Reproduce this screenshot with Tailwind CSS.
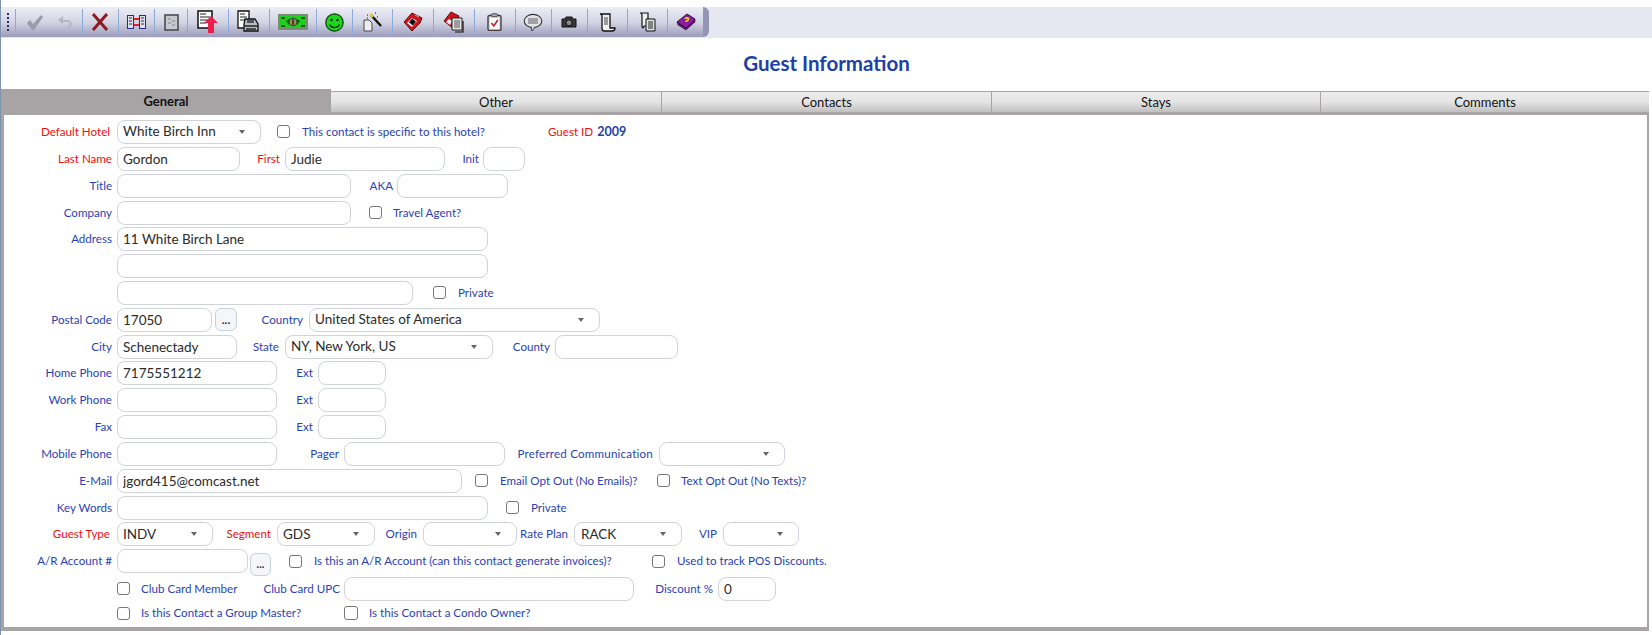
<!DOCTYPE html>
<html lang="en">
<head>
    <meta charset="UTF-8">
    <title>Guest Information</title>
    <script src="https://cdn.jsdelivr.net/npm/@tailwindcss/browser@4"></script>
</head>
<body class="bg-white font-['Lato',sans-serif]">
<div class="h-[635px] w-[1652px] overflow-hidden border-l border-[#7b93ad] pt-[7px]">

    <!-- Toolbar -->
    <div class="h-[31px] bg-[#e6e7f0] flex">
        <div class="w-[708px] h-[30px] flex items-center rounded-r-[6px] bg-gradient-to-b from-[#ecedf5] via-[#d4d5e4] to-[#9c9cbc] border-r-[6px] border-[#9494b4]">
            <!-- grip -->
            <div class="w-[14px] h-full flex flex-col items-center justify-center gap-[2px] pl-[1px]">
                <span class="w-[2px] h-[2px] bg-[#26305e]"></span><span class="w-[2px] h-[2px] bg-[#26305e]"></span><span class="w-[2px] h-[2px] bg-[#26305e]"></span><span class="w-[2px] h-[2px] bg-[#26305e]"></span><span class="w-[2px] h-[2px] bg-[#26305e]"></span>
            </div>
            <div class="w-[41px] h-[26px] pr-[2px] border-l border-[#8aa8d8] flex items-center justify-center">
                <svg width="18" height="18" viewBox="0 0 18 18"><path d="M1 10l3-3 3 4 8-9 2 2-9 13h-2z" fill="#9b9eaa"/></svg>
            </div>
            <div class="w-[26px] h-[26px] pr-[6px] flex items-center justify-center">
                <svg width="15" height="12" viewBox="0 0 15 12"><path d="M3 5h7a3 3 0 0 1 2 5l-2 1" fill="none" stroke="#b4b6c0" stroke-width="2"/><path d="M0 4l5-4v8z" fill="#b4b6c0"/></svg>
            </div>
            <div class="w-[36px] h-[26px] border-l border-[#8aa8d8] flex items-center justify-center">
                <svg width="18" height="18" viewBox="0 0 18 18"><path d="M2 1l14 16M16 1L2 17" fill="none" stroke="#8c1a1e" stroke-width="3"/></svg>
            </div>
            <div class="w-[37px] h-[26px] border-l border-[#8aa8d8] flex items-center justify-center">
                <svg width="19" height="14" viewBox="0 0 19 14"><rect x="0.5" y="0.5" width="6" height="13" fill="#dfe0ee" stroke="#27279a"/><rect x="12.5" y="0.5" width="6" height="13" fill="#dfe0ee" stroke="#27279a"/><path d="M2 3h3M2 6h3M2 9h3M14 3h3M14 6h3M14 9h3" stroke="#333"/><path d="M7 4h5M7 10h5" stroke="#e8202a" stroke-width="2"/></svg>
            </div>
            <div class="w-[33px] h-[26px] border-l border-[#8aa8d8] flex items-center justify-center">
                <svg width="15" height="17" viewBox="0 0 15 17"><rect x="1" y="1" width="13" height="15" fill="#c8c8d0" stroke="#444" stroke-width="1.5"/><path d="M4 5h3M8 7h3M4 9h3M8 11h3" stroke="#888"/></svg>
            </div>
            <div class="w-[41px] h-[26px] border-l border-[#8aa8d8] flex items-center justify-center">
                <svg width="22" height="24" viewBox="0 0 22 24"><path d="M1 1h14v17H1z" fill="#fff" stroke="#111" stroke-width="1.5"/><path d="M3 4h6M3 7h10M3 10h8M3 13h6" stroke="#222" stroke-width="1.2"/><path d="M14 6l7 7h-4v10h-6V13H7z" fill="#e8204a"/></svg>
            </div>
            <div class="w-[41px] h-[26px] border-l border-[#8aa8d8] flex items-center justify-center">
                <svg width="24" height="24" viewBox="0 0 24 24"><path d="M1 1h11v17H1z" fill="#fff" stroke="#111" stroke-width="1.3"/><path d="M3 4h5M3 7h7M3 10h6" stroke="#222"/><path d="M8 9h10l3 5v7H7v-7z" fill="#b8bcc4" stroke="#111" stroke-width="1.3"/><path d="M7 16h14M9 19h10" stroke="#222" stroke-width="1.5"/><rect x="10" y="10" width="7" height="3" fill="#555"/></svg>
            </div>
            <div class="w-[47px] h-[26px] border-l border-[#8aa8d8] flex items-center justify-center">
                <svg width="30" height="16" viewBox="0 0 30 16"><rect width="30" height="16" fill="#7d8a76"/><rect x="2" y="2" width="26" height="12" fill="#1ed01e"/><circle cx="15" cy="8" r="4" fill="#7a9a60" stroke="#374b2b"/><path d="M15 5v6" stroke="#7a2a20" stroke-width="2"/><path d="M3 3h4v2H3zM23 3h4v2h-4zM3 11h4v2H3zM23 11h4v2h-4zM8 7l3-2v6zM22 7l-3-2v6z" fill="#0d5d0d"/></svg>
            </div>
            <div class="w-[36px] h-[26px] border-l border-[#8aa8d8] flex items-center justify-center">
                <svg width="19" height="19" viewBox="0 0 19 19"><circle cx="9.5" cy="9.5" r="8.7" fill="#18d818" stroke="#0b3d0b" stroke-width="1.2"/><circle cx="6.5" cy="7" r="1.3" fill="#062806"/><circle cx="12.5" cy="7" r="1.3" fill="#062806"/><path d="M4.5 11.5a5.5 5.5 0 0 0 10 0" fill="none" stroke="#062806" stroke-width="1.3"/></svg>
            </div>
            <div class="w-[41px] h-[26px] border-l border-[#8aa8d8] flex items-center justify-center">
                <svg width="19" height="20" viewBox="0 0 19 20"><path d="M1 8h5l3 3v8H1z" fill="#eeeeee" stroke="#444"/><path d="M8 3l10 11" stroke="#111" stroke-width="2.4"/><path d="M7 2l3 3" stroke="#e8d020" stroke-width="2.4"/><path d="M4 3h1M12 1h1M14 5h1M4 6h1" stroke="#a03030" stroke-width="1.3"/></svg>
            </div>
            <div class="w-[41px] h-[26px] border-l border-[#8aa8d8] flex items-center justify-center">
                <svg width="20" height="20" viewBox="0 0 20 20"><path d="M1 10L9 1l10 5-2 5-8 8z" fill="#d0141c" stroke="#5a0c0c"/><path d="M4 11l5-5 5 3-5 6z" fill="#ececf2"/><rect x="7" y="7.5" width="5" height="5" fill="#111" transform="rotate(40 9.5 10)"/><path d="M12 3l4 2" stroke="#f0a0a0"/></svg>
            </div>
            <div class="w-[41px] h-[26px] border-l border-[#8aa8d8] flex items-center justify-center">
                <svg width="22" height="22" viewBox="0 0 22 22"><path d="M1 10L8 1l8 4-5 13z" fill="#d0141c" stroke="#5a0c0c"/><path d="M3 11l3-3 3 2-2 4z" fill="#ececf2"/><path d="M20 10v11H12" fill="none" stroke="#111" stroke-width="1.2"/><path d="M9 7h10v12H9z" fill="#e4e4e4" stroke="#222"/><path d="M11 10h6M11 12h6M11 14h6M11 16h6" stroke="#555"/></svg>
            </div>
            <div class="w-[41px] h-[26px] border-l border-[#8aa8d8] flex items-center justify-center">
                <svg width="15" height="18" viewBox="0 0 15 18"><rect x="1" y="2.5" width="13" height="15" rx="1.5" fill="#dcdce4" stroke="#443f3f" stroke-width="1.4"/><rect x="3" y="5" width="9" height="10.5" fill="#fff"/><rect x="4.5" y="0.7" width="6" height="3" rx="1" fill="#aaa" stroke="#333" stroke-width="0.8"/><path d="M4.5 10l2.3 3 4-6" fill="none" stroke="#b81c2c" stroke-width="1.5"/></svg>
            </div>
            <div class="w-[36px] h-[26px] border-l border-[#8aa8d8] flex items-center justify-center">
                <svg width="20" height="19" viewBox="0 0 20 19"><ellipse cx="10" cy="8" rx="8.8" ry="6.6" fill="#e4e4e8" stroke="#333" stroke-width="1.1"/><rect x="5" y="5" width="10" height="6" fill="#a0a0a8"/><path d="M8 14l1 4 3-3.5" fill="#e4e4e8" stroke="#333"/></svg>
            </div>
            <div class="w-[36px] h-[26px] border-l border-[#8aa8d8] flex items-center justify-center">
                <svg width="16" height="12" viewBox="0 0 16 12"><path d="M1 3h3l1-2h6l1 2h3v8H1z" fill="#38383c" stroke="#111"/><circle cx="8" cy="6.8" r="3" fill="#8a8a90" stroke="#111"/></svg>
            </div>
            <div class="w-[41px] h-[26px] border-l border-[#8aa8d8] flex items-center justify-center">
                <svg width="17" height="19" viewBox="0 0 17 19"><path d="M1 1h10v14h5c0 2-1 3-3 3H5c-1 0-2-1-2-3V3C3 2 2 1 1 1z" fill="#f0f0f2" stroke="#111" stroke-width="1.3"/><path d="M5 5h4M5 7h4M5 9h4M5 11h4" stroke="#444"/></svg>
            </div>
            <div class="w-[40px] h-[26px] border-l border-[#8aa8d8] flex items-center justify-center">
                <svg width="17" height="20" viewBox="0 0 17 20"><path d="M1 1h8v13H5l-1 2c-1 0-1-1-1-2V3C3 2 2 1 1 1z" fill="#f0f0f2" stroke="#111" stroke-width="1.2"/><path d="M7 7h9v12H7z" fill="#e0e0e0" stroke="#111"/><path d="M9 10h5M9 12h5M9 14h5M9 16h5" stroke="#222"/></svg>
            </div>
            <div class="w-[36px] h-[26px] border-l border-[#8aa8d8] flex items-center justify-center">
                <svg width="20" height="18" viewBox="0 0 20 18"><path d="M1 9L11 1l8 5-9 9z" fill="#8c1fa0" stroke="#3a0c48"/><path d="M1 9l1 3 8 5 9-8v-3l-9 9z" fill="#5b1268" stroke="#3a0c48" stroke-width="0.6"/><path d="M9 6c1-2 5-1 3 1-1 1-2 1-2 2" fill="none" stroke="#f0d820" stroke-width="1.6"/></svg>
            </div>
        </div>
    </div>

    <!-- Title -->
    <h1 class="h-[51px] flex items-center justify-center text-[20.5px] font-bold text-[#1d3fa8]">Guest Information</h1>

    <!-- Tabs -->
    <div class="flex h-[26px] w-[1648px] text-[13px] text-[#111] text-center">
        <div class="w-[330px] bg-[#a8a4a6] font-bold leading-[25px]">General</div>
        <div class="w-[330px] bg-[#a8a4a6] border-t-[2px] border-white"><div class="h-[21px] leading-[20px] bg-gradient-to-b from-[#ececec] via-[#e4e4e4] to-[#c2bfc0] border-t border-[#a5a5a5]">Other</div></div>
        <div class="w-[330px] bg-[#a8a4a6] pl-[1px] border-t-[2px] border-white"><div class="h-[21px] leading-[20px] bg-gradient-to-b from-[#ececec] via-[#e4e4e4] to-[#c2bfc0] border-t border-[#a5a5a5]">Contacts</div></div>
        <div class="w-[329px] bg-[#a8a4a6] pl-[1px] border-t-[2px] border-white"><div class="h-[21px] leading-[20px] bg-gradient-to-b from-[#ececec] via-[#e4e4e4] to-[#c2bfc0] border-t border-[#a5a5a5]">Stays</div></div>
        <div class="w-[329px] bg-[#a8a4a6] pl-[1px] border-t-[2px] border-white"><div class="h-[21px] leading-[20px] bg-gradient-to-b from-[#ececec] via-[#e4e4e4] to-[#c2bfc0] border-t border-[#a5a5a5]">Comments</div></div>
    </div>

    <!-- General panel -->
    <div class="w-[1648px] h-[516px] border-l-[3px] border-r-[2px] border-b-[4px] border-[#a8a4a6] pt-[3px] text-[11.6px] text-[#2a3fb5]">

        <div class="flex items-center h-[27px]">
            <label class="w-[113px] text-right pr-[7px] text-[#f01010]">Default Hotel</label>
            <div class="w-[144px] h-6 border border-[#d0d3da] rounded-lg pl-[5px] pr-[15px] flex items-center justify-between text-[13.5px] text-[#2b2b2b]">White Birch Inn <span class="w-0 h-0 border-x-[3px] border-x-transparent border-t-[4px] border-t-[#666]"></span></div>
            <input type="checkbox" class="appearance-none w-[13px] h-[13px] ml-[16px] border border-[#777] rounded-[3px]">
            <span class="ml-[12px] w-[246px]">This contact is specific to this hotel?</span>
            <span class="text-[#f01010]">Guest ID</span>
            <span class="ml-[4px] mt-[2px] font-bold text-[12.5px] text-[#1d3fa8]">2009</span>
        </div>

        <div class="flex items-center h-[27px]">
            <label class="w-[113px] text-right pr-[5px] text-[#f01010]">Last Name</label>
            <input value="Gordon" class="w-[123px] h-6 border border-[#d0d3da] rounded-lg px-[5px] text-[13.5px] text-[#2b2b2b]">
            <label class="w-[45px] text-right pr-[5px] text-[#f01010]">First</label>
            <input value="Judie" class="w-[160px] h-6 border border-[#d0d3da] rounded-lg px-[5px] text-[13.5px] text-[#2b2b2b]">
            <label class="w-[38px] text-right pr-[4px]">Init</label>
            <input class="w-[42px] h-6 border border-[#d0d3da] rounded-lg px-[5px] text-[13.5px] text-[#2b2b2b]">
        </div>

        <div class="flex items-center h-[27px]">
            <label class="w-[113px] text-right pr-[5px]">Title</label>
            <input class="w-[234px] h-6 border border-[#d0d3da] rounded-lg px-[5px] text-[13.5px] text-[#2b2b2b]">
            <label class="w-[46px] text-right pr-[4px]">AKA</label>
            <input class="w-[111px] h-6 border border-[#d0d3da] rounded-lg px-[5px] text-[13.5px] text-[#2b2b2b]">
        </div>

        <div class="flex items-center h-[27px]">
            <label class="w-[113px] text-right pr-[5px]">Company</label>
            <input class="w-[234px] h-6 border border-[#d0d3da] rounded-lg px-[5px] text-[13.5px] text-[#2b2b2b]">
            <input type="checkbox" class="appearance-none w-[13px] h-[13px] ml-[18px] border border-[#777] rounded-[3px]">
            <span class="ml-[11px]">Travel Agent?</span>
        </div>

        <div class="flex items-center h-[26px]">
            <label class="w-[113px] text-right pr-[5px]">Address</label>
            <input value="11 White Birch Lane" class="w-[371px] h-6 border border-[#d0d3da] rounded-lg px-[5px] text-[13.5px] text-[#2b2b2b]">
        </div>

        <div class="flex items-center h-[27px] pl-[113px]">
            <input class="w-[371px] h-6 border border-[#d0d3da] rounded-lg px-[5px] text-[13.5px] text-[#2b2b2b]">
        </div>

        <div class="flex items-center h-[27px] pl-[113px]">
            <input class="w-[296px] h-6 border border-[#d0d3da] rounded-lg px-[5px] text-[13.5px] text-[#2b2b2b]">
            <input type="checkbox" class="appearance-none w-[13px] h-[13px] ml-[20px] border border-[#777] rounded-[3px]">
            <span class="ml-[12px]">Private</span>
        </div>

        <div class="flex items-center h-[27px]">
            <label class="w-[113px] text-right pr-[5px]">Postal Code</label>
            <input value="17050" class="w-[95px] h-6 border border-[#d0d3da] rounded-lg px-[5px] text-[13.5px] text-[#2b2b2b]">
            <button class="w-[22px] h-[23px] ml-[3px] border border-[#c8d0dc] rounded-md bg-[#f4f6f9] font-bold text-[#333] text-[12px] leading-[20px]">...</button>
            <label class="w-[72px] text-right pr-[6px]">Country</label>
            <div class="w-[291px] h-6 border border-[#d0d3da] rounded-lg pl-[5px] pr-[15px] flex items-center justify-between text-[13.5px] text-[#2b2b2b]">United States of America <span class="w-0 h-0 border-x-[3px] border-x-transparent border-t-[4px] border-t-[#666]"></span></div>
        </div>

        <div class="flex items-center h-[27px]">
            <label class="w-[113px] text-right pr-[5px]">City</label>
            <input value="Schenectady" class="w-[120px] h-6 border border-[#d0d3da] rounded-lg px-[5px] text-[13.5px] text-[#2b2b2b]">
            <label class="w-[48px] text-right pr-[6px]">State</label>
            <div class="w-[208px] h-6 border border-[#d0d3da] rounded-lg pl-[5px] pr-[15px] flex items-center justify-between text-[13.5px] text-[#2b2b2b]">NY, New York, US <span class="w-0 h-0 border-x-[3px] border-x-transparent border-t-[4px] border-t-[#666]"></span></div>
            <label class="w-[62px] text-right pr-[5px]">County</label>
            <input class="w-[123px] h-6 border border-[#d0d3da] rounded-lg px-[5px] text-[13.5px] text-[#2b2b2b]">
        </div>

        <div class="flex items-center h-[26px]">
            <label class="w-[113px] text-right pr-[5px]">Home Phone</label>
            <input value="7175551212" class="w-[160px] h-6 border border-[#d0d3da] rounded-lg px-[5px] text-[13.5px] text-[#2b2b2b]">
            <label class="w-[41px] text-right pr-[5px]">Ext</label>
            <input class="w-[68px] h-6 border border-[#d0d3da] rounded-lg px-[5px] text-[13.5px] text-[#2b2b2b]">
        </div>

        <div class="flex items-center h-[27px]">
            <label class="w-[113px] text-right pr-[5px]">Work Phone</label>
            <input class="w-[160px] h-6 border border-[#d0d3da] rounded-lg px-[5px] text-[13.5px] text-[#2b2b2b]">
            <label class="w-[41px] text-right pr-[5px]">Ext</label>
            <input class="w-[68px] h-6 border border-[#d0d3da] rounded-lg px-[5px] text-[13.5px] text-[#2b2b2b]">
        </div>

        <div class="flex items-center h-[27px]">
            <label class="w-[113px] text-right pr-[5px]">Fax</label>
            <input class="w-[160px] h-6 border border-[#d0d3da] rounded-lg px-[5px] text-[13.5px] text-[#2b2b2b]">
            <label class="w-[41px] text-right pr-[5px]">Ext</label>
            <input class="w-[68px] h-6 border border-[#d0d3da] rounded-lg px-[5px] text-[13.5px] text-[#2b2b2b]">
        </div>

        <div class="flex items-center h-[27px]">
            <label class="w-[113px] text-right pr-[5px]">Mobile Phone</label>
            <input class="w-[160px] h-6 border border-[#d0d3da] rounded-lg px-[5px] text-[13.5px] text-[#2b2b2b]">
            <label class="w-[67px] text-right pr-[5px]">Pager</label>
            <input class="w-[161px] h-6 border border-[#d0d3da] rounded-lg px-[5px] text-[13.5px] text-[#2b2b2b]">
            <label class="w-[154px] text-right pr-[6px] tracking-[0.2px]">Preferred Communication</label>
            <div class="w-[126px] h-6 border border-[#d0d3da] rounded-lg pr-[15px] flex items-center justify-end"><span class="w-0 h-0 border-x-[3px] border-x-transparent border-t-[4px] border-t-[#666]"></span></div>
        </div>

        <div class="flex items-center h-[27px]">
            <label class="w-[113px] text-right pr-[5px]">E-Mail</label>
            <input value="jgord415@comcast.net" class="w-[345px] h-6 border border-[#d0d3da] rounded-lg px-[5px] text-[13.5px] text-[#2b2b2b]">
            <input type="checkbox" class="appearance-none w-[13px] h-[13px] ml-[13px] border border-[#777] rounded-[3px]">
            <span class="ml-[12px] w-[157px]">Email Opt Out (No Emails)?</span>
            <input type="checkbox" class="appearance-none w-[13px] h-[13px] border border-[#777] rounded-[3px]">
            <span class="ml-[11px]">Text Opt Out (No Texts)?</span>
        </div>

        <div class="flex items-center h-[27px]">
            <label class="w-[113px] text-right pr-[5px]">Key Words</label>
            <input class="w-[371px] h-6 border border-[#d0d3da] rounded-lg px-[5px] text-[13.5px] text-[#2b2b2b]">
            <input type="checkbox" class="appearance-none w-[13px] h-[13px] ml-[18px] border border-[#777] rounded-[3px]">
            <span class="ml-[12px]">Private</span>
        </div>

        <div class="flex items-center h-[26px]">
            <label class="w-[113px] text-right pr-[7px] text-[#f01010]">Guest Type</label>
            <div class="w-[96px] h-6 border border-[#d0d3da] rounded-lg pl-[5px] pr-[15px] flex items-center justify-between text-[13.5px] text-[#2b2b2b]">INDV <span class="w-0 h-0 border-x-[3px] border-x-transparent border-t-[4px] border-t-[#666]"></span></div>
            <label class="w-[64px] text-right pr-[6px] text-[#f01010]">Segment</label>
            <div class="w-[98px] h-6 border border-[#d0d3da] rounded-lg pl-[5px] pr-[15px] flex items-center justify-between text-[13.5px] text-[#2b2b2b]">GDS <span class="w-0 h-0 border-x-[3px] border-x-transparent border-t-[4px] border-t-[#666]"></span></div>
            <label class="w-[48px] text-right pr-[6px]">Origin</label>
            <div class="w-[94px] h-6 border border-[#d0d3da] rounded-lg pr-[15px] flex items-center justify-end"><span class="w-0 h-0 border-x-[3px] border-x-transparent border-t-[4px] border-t-[#666]"></span></div>
            <label class="w-[57px] text-right pr-[6px]">Rate Plan</label>
            <div class="w-[108px] h-6 border border-[#d0d3da] rounded-lg pl-[6px] pr-[15px] flex items-center justify-between text-[13.5px] text-[#2b2b2b]">RACK <span class="w-0 h-0 border-x-[3px] border-x-transparent border-t-[4px] border-t-[#666]"></span></div>
            <label class="w-[41px] text-right pr-[6px]">VIP</label>
            <div class="w-[76px] h-6 border border-[#d0d3da] rounded-lg pr-[15px] flex items-center justify-end"><span class="w-0 h-0 border-x-[3px] border-x-transparent border-t-[4px] border-t-[#666]"></span></div>
        </div>

        <div class="flex items-center h-[28px]">
            <label class="w-[113px] text-right pr-[5px]">A/R Account #</label>
            <input class="w-[131px] h-6 border border-[#d0d3da] rounded-lg px-[5px] text-[13.5px] text-[#2b2b2b]">
            <button class="w-[21px] h-[23px] ml-[2px] mt-[6px] border border-[#c8d0dc] rounded-md bg-[#f4f6f9] font-bold text-[#333] text-[11px] leading-[20px]">...</button>
            <input type="checkbox" class="appearance-none w-[13px] h-[13px] ml-[18px] border border-[#777] rounded-[3px]">
            <span class="ml-[12px] w-[338px]">Is this an A/R Account (can this contact generate invoices)?</span>
            <input type="checkbox" class="appearance-none w-[13px] h-[13px] border border-[#777] rounded-[3px]">
            <span class="ml-[12px]">Used to track POS Discounts.</span>
        </div>

        <div class="flex items-center h-[27px] pl-[113px]">
            <input type="checkbox" class="appearance-none w-[13px] h-[13px] border border-[#777] rounded-[3px]">
            <span class="ml-[11px] w-[95px] whitespace-nowrap">Club Card Member</span>
            <label class="w-[108px] text-right pr-[4px] whitespace-nowrap">Club Card UPC</label>
            <input class="w-[290px] h-6 border border-[#d0d3da] rounded-lg px-[5px] text-[13.5px] text-[#2b2b2b]">
            <label class="w-[84px] text-right pr-[5px]">Discount %</label>
            <input value="0" class="w-[58px] h-6 border border-[#d0d3da] rounded-lg px-[5px] text-[13.5px] text-[#2b2b2b]">
        </div>

        <div class="flex items-center h-[22px] pl-[113px]">
            <input type="checkbox" class="appearance-none w-[13px] h-[13px] border border-[#777] rounded-[3px]">
            <span class="ml-[11px] w-[203px]">Is this Contact a Group Master?</span>
            <input type="checkbox" class="appearance-none w-[14px] h-[14px] border border-[#777] rounded-[3px]">
            <span class="ml-[11px]">Is this Contact a Condo Owner?</span>
        </div>
    </div>
</div>
</body>
</html>
